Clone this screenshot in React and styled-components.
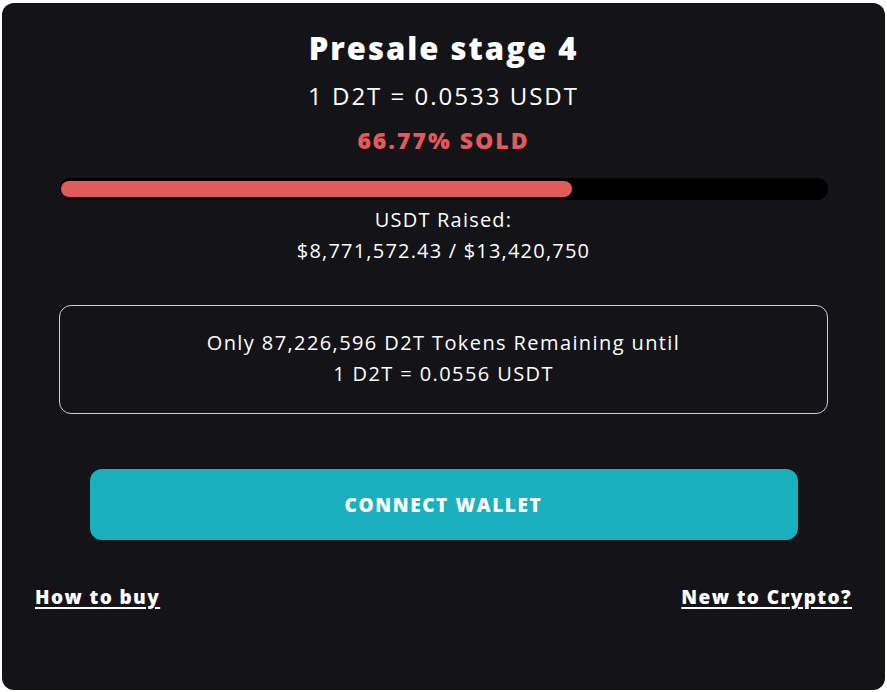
import React from "react";
import styled, { createGlobalStyle } from "styled-components";

const GlobalStyle = createGlobalStyle`
  html, body {
    margin: 0;
    padding: 0;
    background: #ffffff;
  }
  * {
    box-sizing: border-box;
  }
`;

const stage = {
  title: "Presale stage 4",
  price: "1 D2T = 0.0533 USDT",
  sold: 66.77,
  raised: "$8,771,572.43",
  goal: "$13,420,750",
  remaining: "87,226,596",
  nextPrice: "1 D2T = 0.0556 USDT",
};

const App = () => {
  return (
    <>
      <GlobalStyle />
      <Card>
        <Title>{stage.title}</Title>
        <Price>{stage.price}</Price>
        <Sold>{stage.sold}% SOLD</Sold>
        <Track>
          <Fill style={{ width: `${stage.sold}%` }} />
        </Track>
        <Raised>
          USDT Raised:
          <br />
          {stage.raised} / {stage.goal}
        </Raised>
        <InfoBox>
          Only {stage.remaining} D2T Tokens Remaining until
          <br />
          {stage.nextPrice}
        </InfoBox>
        <ConnectButton>CONNECT WALLET</ConnectButton>
        <Links>
          <HelpLink href="#">How to buy</HelpLink>
          <HelpLink href="#">New to Crypto?</HelpLink>
        </Links>
      </Card>
    </>
  );
};

const Card = styled.div`
  margin: 3px 2px 0 2px;
  width: 883px;
  height: 687px;
  background-color: #141418;
  border-radius: 12px;
  padding: 25px 33px 0 33px;
  display: flex;
  flex-direction: column;
  align-items: center;
  color: #ffffff;
  font-family: "Open Sans", "DejaVu Sans", sans-serif;
`;

const Title = styled.h1`
  margin: 0;
  font-size: 31px;
  font-weight: 800;
  line-height: 40px;
  letter-spacing: 2px;
`;

const Price = styled.div`
  margin-top: 12px;
  font-size: 24px;
  line-height: 32px;
  letter-spacing: 2px;
`;

const Sold = styled.div`
  margin-top: 12px;
  font-size: 23px;
  font-weight: 800;
  line-height: 32px;
  letter-spacing: 2px;
  color: #e25b5b;
`;

const Track = styled.div`
  margin-top: 22px;
  width: 768px;
  height: 22px;
  background-color: #000000;
  border-radius: 11px;
  padding: 3px 1px;
`;

const Fill = styled.div`
  height: 100%;
  background-color: #e25b5b;
  border-radius: 8px;
`;

const Raised = styled.div`
  margin-top: 4px;
  font-size: 20px;
  line-height: 31px;
  letter-spacing: 1.2px;
  text-align: center;
`;

const InfoBox = styled.div`
  margin-top: 39px;
  width: 769px;
  height: 109px;
  border: 1px solid #c9cdf0;
  border-radius: 12px;
  display: flex;
  align-items: center;
  justify-content: center;
  text-align: center;
  font-size: 20px;
  line-height: 31px;
  letter-spacing: 1.4px;
  padding-bottom: 3px;
`;

const ConnectButton = styled.button`
  margin-top: 55px;
  width: 708px;
  height: 71px;
  border: none;
  border-radius: 12px;
  background-color: #1bb0bd;
  color: #ffffff;
  font-family: inherit;
  font-size: 19px;
  font-weight: 800;
  letter-spacing: 1.6px;
  cursor: pointer;
`;

const Links = styled.div`
  margin-top: 44px;
  width: 100%;
  display: flex;
  justify-content: space-between;
`;

const HelpLink = styled.a`
  color: #ffffff;
  font-size: 19px;
  font-weight: 800;
  letter-spacing: 1.4px;
  text-decoration: underline;
  text-underline-offset: 3px;
  text-decoration-thickness: 2px;
`;

export default App;
